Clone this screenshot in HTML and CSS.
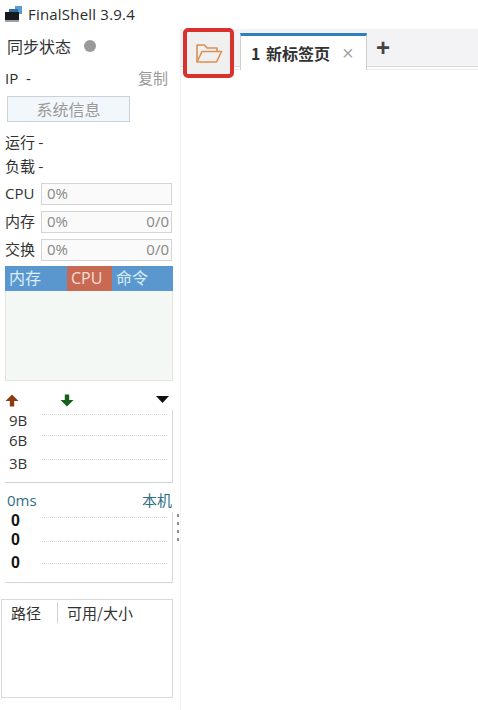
FILE: index.html
```html
<!DOCTYPE html>
<html lang="zh">
<head>
<meta charset="utf-8">
<title>FinalShell 3.9.4</title>
<link rel="stylesheet" href="styles.css">
</head>
<body>
<header class="titlebar">
  <svg class="logo" width="19" height="16" viewBox="0 0 19 16"><rect x="12" y="0" width="7" height="8" fill="#5a9bd0"/><rect x="6" y="3" width="9" height="6" fill="#2f6ea5"/><rect x="2" y="6" width="14" height="8" fill="#16181c"/><rect x="2" y="14" width="14" height="2" fill="#9aa3ab"/></svg>
  <span class="app-name">FinalShell 3.9.4</span>
</header>
<div class="main">
  <aside class="sidebar">
    <div class="sync"><span>同步状态</span><i class="dot"></i></div>
    <div class="ip"><span>IP&nbsp; -</span><span class="copy">复制</span></div>
    <button class="sysinfo">系统信息</button>
    <div class="stat stat-first">运行 -</div>
    <div class="stat">负载 -</div>
    <div class="meter meter-first"><span class="meter-label">CPU</span><div class="meter-box"><span>0%</span></div></div>
    <div class="meter"><span class="meter-label">内存</span><div class="meter-box"><span>0%</span><span class="meter-val">0/0</span></div></div>
    <div class="meter"><span class="meter-label">交换</span><div class="meter-box"><span>0%</span><span class="meter-val">0/0</span></div></div>
    <div class="proc">
      <div class="proc-head"><span class="col-mem">内存</span><span class="col-cpu">CPU</span><span class="col-cmd">命令</span></div>
    </div>
    <div class="net-head">
      <svg class="arrow-up" width="14" height="13" viewBox="0 0 14 13"><path d="M7 0.5 L13.5 7 H9.2 V12.5 H4.8 V7 H0.5 Z" fill="#8a3d12"/></svg>
      <svg class="arrow-down" width="14" height="13" viewBox="0 0 14 13"><path d="M4.8 0.5 H9.2 V6 H13.5 L7 12.5 L0.5 6 H4.8 Z" fill="#14601c"/></svg>
      <svg class="caret" width="13" height="7" viewBox="0 0 13 7"><path d="M0 0 H13 L6.5 7 Z" fill="#111"/></svg>
    </div>
    <div class="chart chart-net">
      <div class="chart-row row-a"><span>9B</span><i></i></div>
      <div class="chart-row row-b"><span>6B</span><i></i></div>
      <div class="chart-row row-c"><span>3B</span><i></i></div>
    </div>
    <div class="ping-head"><span>0ms</span><span>本机</span></div>
    <div class="chart chart-ping">
      <div class="chart-row row-d"><span>0</span><i></i></div>
      <div class="chart-row row-e"><span>0</span><i></i></div>
      <div class="chart-row row-f"><span>0</span><i></i></div>
      <div class="grip"><b></b><b></b><b></b><b></b></div>
    </div>
    <div class="disk">
      <div class="disk-head"><span class="disk-path">路径</span><span class="disk-size">可用/大小</span></div>
    </div>
  </aside>
  <section class="content">
    <nav class="tabbar">
      <div class="folder-btn">
        <svg width="28" height="22" viewBox="0 0 28 22" fill="none" stroke="#dc8f50" stroke-width="1.6" stroke-linejoin="round"><path d="M2 20 V3 H9.5 L12 6 H22 V9.5"/><path d="M2 20 L7 9.5 H26.5 L21.5 20 Z"/></svg>
      </div>
      <div class="tab"><span class="tab-title">1 新标签页</span><span class="tab-close">×</span></div>
      <div class="tab-add">+</div>
    </nav>
  </section>
</div>
</body>
</html>
```
FILE: styles.css
```css
* { box-sizing: border-box; }
html, body { margin: 0; height: 100%; }
body {
  width: 478px; height: 710px; overflow: hidden; background: #fff; color: #2b2b2b;
  font: 15px/20px "Noto Sans CJK SC", "Liberation Sans", sans-serif;
  display: flex; flex-direction: column;
}
.titlebar { height: 28px; flex: none; display: flex; align-items: center; gap: 6px; padding-left: 3px; }
.logo { flex: none; }
.app-name { font: 15px/20px "Open Sans", "Liberation Sans", sans-serif; color: #2b2b2b; letter-spacing: 0.2px; }
.main { flex: 1; display: flex; min-height: 0; }
.sidebar { width: 181px; flex: none; border-right: 1px solid #efefef; padding-right: 8px; display: flex; flex-direction: column; }
.sync { height: 20px; margin-top: 8px; padding-left: 7px; display: flex; align-items: center; gap: 13px; color: #333; font-size: 16px; }
.dot { width: 12px; height: 12px; border-radius: 50%; background: #9a9a98; }
.ip { height: 20px; margin-top: 12px; padding: 0 4px 0 5px; display: flex; justify-content: space-between; font-family: "Open Sans", "Noto Sans CJK SC", sans-serif; }
.copy { color: #999; font-family: "Noto Sans CJK SC", sans-serif; }
.sysinfo {
  width: 123px; height: 26px; margin: 8px 0 0 7px; padding: 0; flex: none;
  border: 1px solid #c9d2d8; background: #f1f7fb; color: #9a9a9a;
  font: 16px/20px "Noto Sans CJK SC", sans-serif;
}
.stat { height: 20px; margin-top: 4px; padding-left: 5px; color: #333; }
.stat-first { margin-top: 10px; }
.meter { height: 22px; margin-top: 6px; padding-left: 5px; display: flex; align-items: center; }
.meter-first { margin-top: 7px; }
.meter-label { width: 36px; flex: none; padding-bottom: 2px; font-family: "Open Sans", "Noto Sans CJK SC", sans-serif; color: #333; white-space: nowrap; }
.meter-box {
  width: 131px; height: 22px; border: 1px solid #d4d4d4; background: #fafafa; color: #888;
  padding: 0 2px 2px 5px; display: flex; justify-content: space-between; align-items: center;
  font: 15px/20px "Open Sans", sans-serif;
}
.proc { width: 168px; height: 115px; margin: 5px 0 0 5px; background: #f3f8f4; border: 1px solid #e2e6e2; border-top: 0; flex: none; }
.proc-head { height: 25px; background: #5b97cf; color: #dceefb; display: flex; font: 16px/25px "Open Sans", "Noto Sans CJK SC", sans-serif; margin: 0 -1px; }
.proc-head span { display: block; padding-left: 4px; }
.col-mem { width: 62px; }
.col-cpu { width: 45px; background: #c86a53; color: #f8ddd2; }
.col-cmd { flex: 1; }
.net-head { height: 20px; margin-top: 9px; padding: 0 3px 0 5px; display: flex; align-items: center; }
.arrow-down { margin-left: 41px; }
.caret { margin-left: auto; margin-top: -2px; }
.chart { width: 168px; margin-left: 5px; border-right: 1px solid #d8d8d8; border-bottom: 1px solid #d0d4d6; position: relative; flex: none; }
.chart-row { display: flex; align-items: center; padding-left: 4px; height: 20px; }
.chart-row span { width: 33px; flex: none; font: 15px/20px "Open Sans", sans-serif; color: #333; }
.chart-row i { flex: 1; border-top: 1px dotted #dadada; margin-right: 5px; }
.chart-net { height: 73px; }
.row-a i { transform: translateY(-6px); }
.row-b i { transform: translateY(-5px); }
.row-c { margin-top: 3px; }
.row-c i { transform: translateY(-4px); }
.ping-head { width: 165px; height: 20px; margin: 7px 0 0 7px; display: flex; justify-content: space-between; color: #2f6f86; font: 15px/20px "Open Sans", "Noto Sans CJK SC", sans-serif; }
.chart-ping { height: 71px; margin-top: 2px; }
.chart-ping .chart-row { padding-left: 6px; height: 18px; }
.chart-ping .chart-row span { width: 31px; color: #111; font: 700 16px/18px "Liberation Sans", sans-serif; }
.row-d { margin-top: 0; }
.row-d i { transform: translateY(-4px); }
.row-e { margin-top: 1px; }
.row-e i { transform: translateY(1px); }
.row-f { margin-top: 5px; }
.grip { position: absolute; right: -7px; top: 2px; display: flex; flex-direction: column; gap: 5px; }
.grip b { width: 2px; height: 3px; background: #8d8d8d; display: block; }
.disk { width: 172px; height: 99px; margin: 16px 0 0 1px; border: 1px solid #d8d8d8; flex: none; }
.disk-head { display: flex; height: 21px; margin-top: 2px; color: #333; font: 15px/21px "Noto Sans CJK SC", sans-serif; }
.disk-path { width: 56px; padding-left: 9px; border-right: 1px solid #d0d0d0; }
.disk-size { padding-left: 9px; }
.content { flex: 1; min-width: 0; }
.tabbar { height: 39px; display: flex; align-items: flex-start; background: linear-gradient(#fff 1px, #f3f3f5 1px); border-bottom: 1px solid #d8d8d8; box-shadow: 0 2px 0 #fff, 0 3px 0 #ececec; position: relative; }
.folder-btn {
  width: 51px; height: 50px; margin-left: 2px; flex: none;
  border: 4px solid #d9312d; border-radius: 5px; background: #f0f0f0;
  display: flex; align-items: center; justify-content: center; position: relative; z-index: 1;
}
.tab {
  width: 127px; height: 37px; margin: 5px 0 0 6px; flex: none; background: #fff;
  border-top: 3px solid #2f7fbe; border-right: 1px solid #cfcfcf; border-left: 1px solid #cfcfcf;
  display: flex; align-items: center; padding-left: 10px; position: relative;
}
.tab-title { font: 700 16px/20px "Noto Sans CJK SC", sans-serif; color: #333; white-space: nowrap; word-spacing: 2px; }
.tab-close { margin-left: 12px; color: #a8a8a8; font: 20px/20px "Liberation Sans", sans-serif; }
.tab-add { margin: 5px 0 0 9px; font: 700 24px/30px "Liberation Sans", sans-serif; color: #444; }
```
